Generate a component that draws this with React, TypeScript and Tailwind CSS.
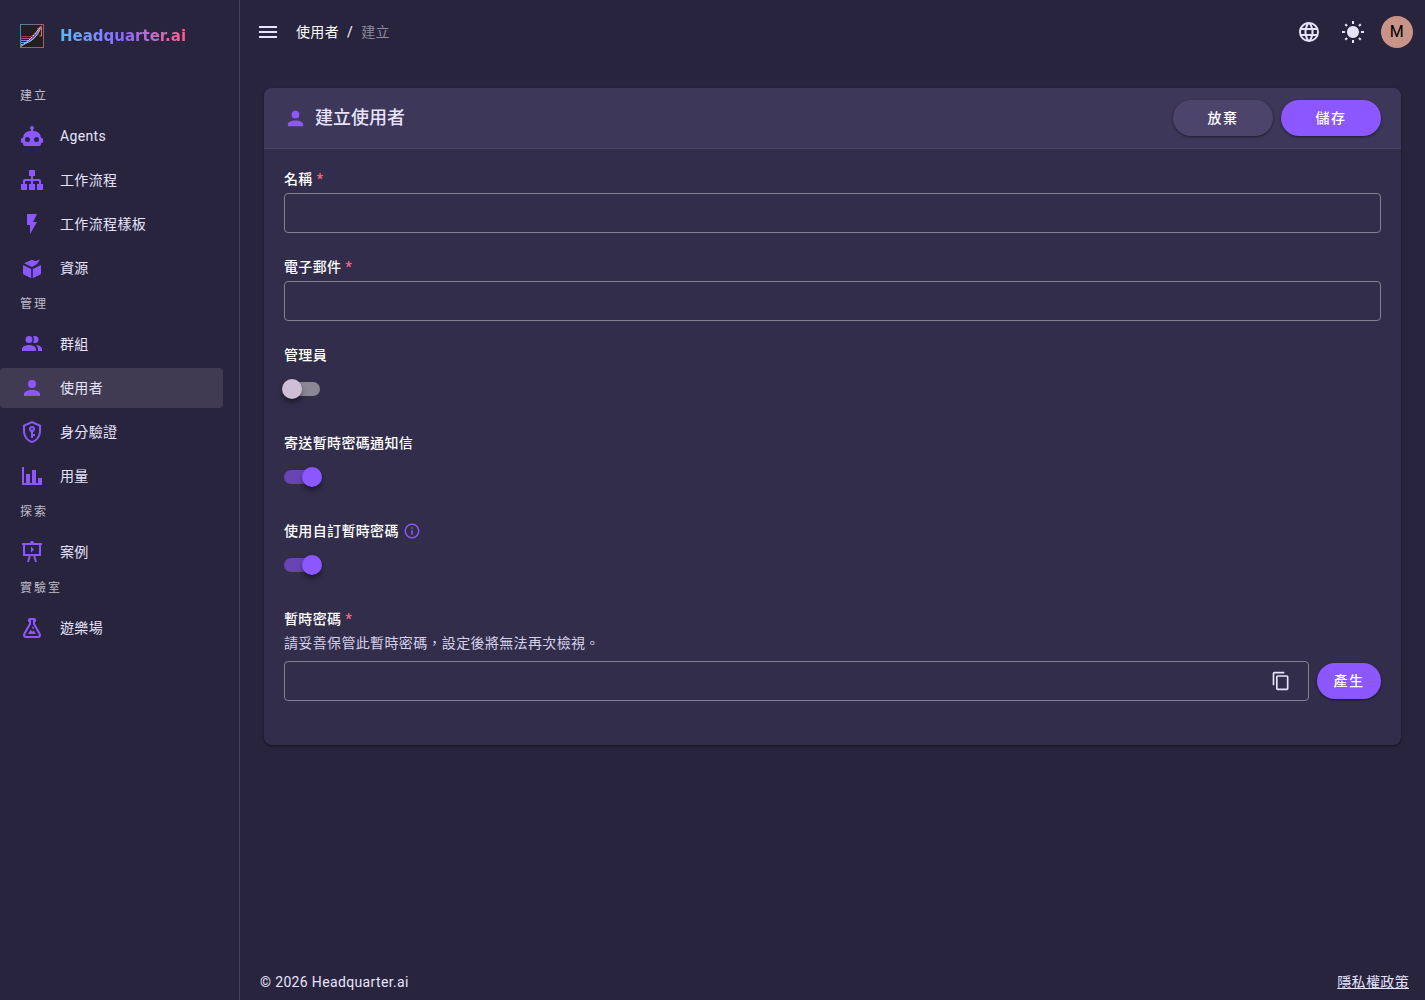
import { useState, type ReactNode } from "react";

const icons = {
  robot:
    "M12,2A2,2 0 0,1 14,4C14,4.74 13.6,5.39 13,5.73V7H14A7,7 0 0,1 21,14H22A1,1 0 0,1 23,15V18A1,1 0 0,1 22,19H21V20A2,2 0 0,1 19,22H5A2,2 0 0,1 3,20V19H2A1,1 0 0,1 1,18V15A1,1 0 0,1 2,14H3A7,7 0 0,1 10,7H11V5.73C10.4,5.39 10,4.74 10,4A2,2 0 0,1 12,2M7.5,13A2.5,2.5 0 0,0 5,15.5A2.5,2.5 0 0,0 7.5,18A2.5,2.5 0 0,0 10,15.5A2.5,2.5 0 0,0 7.5,13M16.5,13A2.5,2.5 0 0,0 14,15.5A2.5,2.5 0 0,0 16.5,18A2.5,2.5 0 0,0 19,15.5A2.5,2.5 0 0,0 16.5,13Z",
  sitemap:
    "M9,2V8H11V11H5C3.89,11 3,11.89 3,13V16H1V22H7V16H5V13H11V16H9V22H15V16H13V13H19V16H17V22H23V16H21V13C21,11.89 20.11,11 19,11H13V8H15V2H9Z",
  flash: "M7,2V13H10V22L17,10H13L17,2H7Z",
  box: "M3,9L11.2,13.1V22.2L3.6,18.4C3.2,18.2 3,17.8 3,17.4V9M21,9V17.4C21,17.8 20.8,18.2 20.4,18.4L12.8,22.2V13.1L21,9M4,7.2L11.2,4.1C11.7,3.9 12.3,3.9 12.8,4.1L14.8,5C16.4,4.9 18.2,4.3 19.8,3.2C19.2,5.4 17.6,7.4 16,8.8L12,10.9L4,7.2Z",
  group:
    "M16 17V19H2V17S2 13 9 13 16 17 16 17M12.5 7.5A3.5 3.5 0 1 0 9 11A3.5 3.5 0 0 0 12.5 7.5M15.94 13A5.32 5.32 0 0 1 18 17V19H22V17S22 13.37 15.94 13M15 4A3.39 3.39 0 0 0 13.07 4.59A5 5 0 0 1 13.07 10.41A3.39 3.39 0 0 0 15 11A3.5 3.5 0 0 0 15 4Z",
  account:
    "M12,4A4,4 0 0,1 16,8A4,4 0 0,1 12,12A4,4 0 0,1 8,8A4,4 0 0,1 12,4M12,14C16.42,14 20,15.79 20,18V20H4V18C4,15.79 7.58,14 12,14Z",
  shieldKey:
    "M21,11C21,16.55 17.16,21.74 12,23C6.84,21.74 3,16.55 3,11V5L12,1L21,5V11M12,21C15.75,20 19,15.54 19,11.22V6.3L12,3.18L5,6.3V11.22C5,15.54 8.25,20 12,21M12,6A3,3 0 0,1 15,9C15,10.31 14.17,11.42 13,11.83V14H15V16H13V18H11V11.83C9.83,11.42 9,10.31 9,9A3,3 0 0,1 12,6M12,8A1,1 0 0,0 11,9A1,1 0 0,0 12,10A1,1 0 0,0 13,9A1,1 0 0,0 12,8Z",
  chart: "M22,21H2V3H4V19H6V10H10V19H12V6H16V19H18V14H22V21Z",
  presentation:
    "M2,3H10A2,2 0 0,1 12,1A2,2 0 0,1 14,3H22V5H21V16H15.25L17,22H15L13.25,16H10.75L9,22H7L8.75,16H3V5H2V3M5,5V14H19V5H5M11,6.5L14,9.5L11,12.5V6.5Z",
  flask:
    "M6,22A3,3 0 0,1 3,19C3,18.4 3.18,17.84 3.5,17.37L9,7.81V6A1,1 0 0,1 8,5V4A2,2 0 0,1 10,2H14A2,2 0 0,1 16,4V5A1,1 0 0,1 15,6V7.81L20.5,17.37C20.82,17.84 21,18.4 21,19A3,3 0 0,1 18,22H6M5,19A1,1 0 0,0 6,20H18A1,1 0 0,0 19,19C19,18.79 18.93,18.59 18.82,18.43L13,8.35V4H11V8.35L5.18,18.43C5.07,18.59 5,18.79 5,19M8,18L10.5,13.7L12.5,15.7L13.8,14.4L16,18H8M13,10.8A0.9,0.9 0 1,1 12.9,10.8Z",
  copy: "M19,21H8V7H19M19,5H8A2,2 0 0,0 6,7V21A2,2 0 0,0 8,23H19A2,2 0 0,0 21,21V7A2,2 0 0,0 19,5M16,1H4A2,2 0 0,0 2,3V17H4V3H16V1Z",
  web: "M16.36,14C16.44,13.34 16.5,12.68 16.5,12C16.5,11.32 16.44,10.66 16.36,10H19.74C19.9,10.64 20,11.31 20,12C20,12.69 19.9,13.36 19.74,14M14.59,19.56C15.19,18.45 15.65,17.25 15.97,16H18.92C17.96,17.65 16.43,18.93 14.59,19.56M14.34,14H9.66C9.56,13.34 9.5,12.68 9.5,12C9.5,11.32 9.56,10.65 9.66,10H14.34C14.43,10.65 14.5,11.32 14.5,12C14.5,12.68 14.43,13.34 14.34,14M12,19.96C11.17,18.76 10.5,17.43 10.09,16H13.91C13.5,17.43 12.83,18.76 12,19.96M8,8H5.08C6.03,6.34 7.57,5.06 9.4,4.44C8.8,5.55 8.35,6.75 8,8M5.08,16H8C8.35,17.25 8.8,18.45 9.4,19.56C7.57,18.93 6.03,17.65 5.08,16M4.26,14C4.1,13.36 4,12.69 4,12C4,11.31 4.1,10.64 4.26,10H7.64C7.56,10.66 7.5,11.32 7.5,12C7.5,12.68 7.56,13.34 7.64,14M12,4.03C12.83,5.23 13.5,6.57 13.91,8H10.09C10.5,6.57 11.17,5.23 12,4.03M18.92,8H15.97C15.65,6.75 15.19,5.55 14.59,4.44C16.43,5.07 17.96,6.34 18.92,8M12,2C6.47,2 2,6.5 2,12A10,10 0 0,0 12,22A10,10 0 0,0 22,12A10,10 0 0,0 12,2Z",
  menu: "M3,6H21V8H3V6M3,11H21V13H3V11M3,16H21V18H3V16Z",
  sun: "M12,6A6,6 0 1,1 11.99,6M11,1H13V4H11V1M11,20H13V23H11V20M1,11H4V13H1V11M20,11H23V13H20V11M3.55,4.96L4.96,3.55L6.76,5.34L5.34,6.76L3.55,4.96M17.24,5.34L19.04,3.55L20.45,4.96L18.66,6.76L17.24,5.34M3.55,19.04L5.34,17.24L6.76,18.66L4.96,20.45L3.55,19.04M17.24,18.66L18.66,17.24L20.45,19.04L19.04,20.45L17.24,18.66Z",
  info: "M11,9H13V7H11M12,20C7.59,20 4,16.41 4,12C4,7.59 7.59,4 12,4C16.41,4 20,7.59 20,12C20,16.41 16.41,20 12,20M12,2A10,10 0 0,0 2,12A10,10 0 0,0 12,22A10,10 0 0,0 22,12A10,10 0 0,0 12,2M11,17H13V11H11V17Z",
};

type IconName = keyof typeof icons;

function Icon({ name, className = "size-6" }: { name: IconName; className?: string }) {
  return (
    <svg viewBox="0 0 24 24" className={`shrink-0 ${className}`} fill="currentColor" aria-hidden="true">
      <path d={icons[name]} />
    </svg>
  );
}

function LogoMark() {
  return (
    <svg viewBox="0 0 24 24" className="size-6 shrink-0" fill="none" aria-hidden="true">
      <defs>
        <linearGradient id="frame" x1="0" y1="0" x2="1" y2="0">
          <stop offset="0" stopColor="#3f8ba3" />
          <stop offset="0.5" stopColor="#6b6ca0" />
          <stop offset="1" stopColor="#b0566a" />
        </linearGradient>
        <linearGradient id="rise" x1="0" y1="24" x2="24" y2="0" gradientUnits="userSpaceOnUse">
          <stop offset="0" stopColor="#6fc3f0" />
          <stop offset="0.5" stopColor="#b9c4f5" />
          <stop offset="1" stopColor="#d9736f" />
        </linearGradient>
      </defs>
      <rect x="0.5" y="0.5" width="23" height="23" fill="#231f20" stroke="url(#frame)" />
      <path d="M1 12.5H11C14 11 17 7 20 3" stroke="#a83440" />
      <path d="M1 14.5H10C14 13 17 8 20.5 3" stroke="#a05a9a" />
      <path d="M1 16.5H9C14 14 17 9 21 3" stroke="#8a7be0" />
      <path d="M1 18.5H7C13 17 17 11 21 4" stroke="#4aa0e0" />
      <path d="M1 22.5C6 18 16 17 20 5" stroke="url(#rise)" />
      <path d="M1 21C7 19 13 13 21 2" stroke="#d8e8f8" strokeDasharray="2 1" />
      <path d="M21.5 3V12H19.5" stroke="#c98a5a" />
      <path d="M17 5L22 1.5" stroke="#c95060" />
    </svg>
  );
}

const sections: { title: string; items: { label: string; icon: IconName; active?: boolean }[] }[] = [
  {
    title: "建立",
    items: [
      { label: "Agents", icon: "robot" },
      { label: "工作流程", icon: "sitemap" },
      { label: "工作流程樣板", icon: "flash" },
      { label: "資源", icon: "box" },
    ],
  },
  {
    title: "管理",
    items: [
      { label: "群組", icon: "group" },
      { label: "使用者", icon: "account", active: true },
      { label: "身分驗證", icon: "shieldKey" },
      { label: "用量", icon: "chart" },
    ],
  },
  { title: "探索", items: [{ label: "案例", icon: "presentation" }] },
  { title: "實驗室", items: [{ label: "遊樂場", icon: "flask" }] },
];

function Sidebar() {
  return (
    <aside className="w-60 shrink-0 border-r border-[#464259]">
      <a href="#" className="flex h-[72px] items-center gap-4 px-5">
        <LogoMark />
        <span className="bg-linear-to-r from-[#56b9fb] via-[#8c66ff] to-[#ff5c86] bg-clip-text font-['DejaVu_Sans'] text-[15px] leading-5 font-bold tracking-normal text-transparent">
          Headquarter.ai
        </span>
      </a>
      <nav className="pt-2 pr-4">
        {sections.map((section) => (
          <section key={section.title}>
            <h2 className="mb-1 px-5 text-xs leading-8 tracking-[2px] text-[#c0bdcb]">{section.title}</h2>
            <ul className="flex flex-col gap-1">
              {section.items.map((item) => (
                <li key={item.label}>
                  <a
                    href="#"
                    aria-current={item.active ? "page" : undefined}
                    className={`flex h-10 items-center gap-4 rounded px-5 ${item.active ? "bg-[#403b53]" : ""}`}
                  >
                    <Icon name={item.icon} className="size-6 text-[#8c57ff]" />
                    {item.label}
                  </a>
                </li>
              ))}
            </ul>
          </section>
        ))}
      </nav>
    </aside>
  );
}

function TopBar() {
  return (
    <header className="flex h-16 items-center pr-3 pl-4">
      <button type="button" aria-label="選單" className="mr-4">
        <Icon name="menu" />
      </button>
      <nav className="flex flex-1 items-center gap-2">
        <a href="#" className="text-white">
          使用者
        </a>
        <span className="text-white">/</span>
        <span className="text-[#8d8a99]">建立</span>
      </nav>
      <div className="flex items-center gap-1">
        <button type="button" aria-label="語言" className="flex size-10 items-center justify-center">
          <Icon name="web" />
        </button>
        <button type="button" aria-label="主題" className="flex size-10 items-center justify-center">
          <Icon name="sun" />
        </button>
        <button
          type="button"
          aria-label="帳號"
          className="ml-1 flex size-8 items-center justify-center rounded-full bg-[#c99487] text-base text-black"
        >
          M
        </button>
      </div>
    </header>
  );
}

function PillButton({ children, className }: { children: ReactNode; className: string }) {
  return (
    <button
      type="button"
      className={`h-9 shrink-0 rounded-full text-center font-medium tracking-widest text-white shadow shadow-black/40 ${className}`}
    >
      {children}
    </button>
  );
}

function Required() {
  return <span className="ml-1 text-[#ff6b85]">*</span>;
}

function TextField({ id, label }: { id: string; label: string }) {
  return (
    <div className="flex flex-col gap-1">
      <label htmlFor={id} className="font-medium text-white">
        {label}
        <Required />
      </label>
      <input
        id={id}
        type="text"
        className="h-10 w-full rounded border border-[#85818f] bg-transparent px-4 outline-none focus:border-[#8c57ff]"
      />
    </div>
  );
}

function SwitchField({ id, label, initial, info }: { id: string; label: string; initial: boolean; info?: boolean }) {
  const [on, setOn] = useState(initial);
  return (
    <div className="flex flex-col gap-1">
      <div className="flex items-center gap-1">
        <label htmlFor={id} className="font-medium text-white">
          {label}
        </label>
        {info && <Icon name="info" className="size-[18px] text-[#8c57ff]" />}
      </div>
      <div className="flex h-10 items-center">
        <input
          id={id}
          type="checkbox"
          role="switch"
          checked={on}
          onChange={() => setOn(!on)}
          className="relative h-3.5 w-9 cursor-pointer appearance-none rounded-full bg-[#8b8795] before:absolute before:-top-[3px] before:-left-0.5 before:size-5 before:rounded-full before:bg-[#cfbfd6] before:shadow-md before:shadow-black/40 checked:bg-[#6746b3] checked:before:left-[18px] checked:before:bg-[#8c57ff]"
        />
      </div>
    </div>
  );
}

export default function App() {
  return (
    <div className="flex min-h-screen bg-[#28243d] font-['Roboto','Noto_Sans_CJK_TC',sans-serif] text-sm leading-5 tracking-wide text-[#e7e3fc]">
      <Sidebar />
      <div className="flex min-w-0 flex-1 flex-col">
        <TopBar />
        <main className="flex-1 p-6">
          <form className="overflow-hidden rounded-lg bg-[#322d4a] shadow shadow-black/40">
            <div className="flex items-center gap-2 border-b border-[#4a4463] bg-[#3d3759] px-5 py-3">
              <Icon name="account" className="size-[23px] text-[#8c57ff]" />
              <h1 className="flex-1 text-lg leading-6 font-medium tracking-normal">建立使用者</h1>
              <PillButton className="w-25 bg-[#4c446b]">放棄</PillButton>
              <PillButton className="w-25 bg-[#8c57ff]">儲存</PillButton>
            </div>
            <div className="flex flex-col gap-6 px-5 pt-5 pb-11">
              <TextField id="name" label="名稱" />
              <TextField id="email" label="電子郵件" />
              <SwitchField id="admin" label="管理員" initial={false} />
              <SwitchField id="notify" label="寄送暫時密碼通知信" initial={true} />
              <SwitchField id="custom" label="使用自訂暫時密碼" initial={true} info />
              <div className="flex flex-col">
                <label htmlFor="password" className="font-medium text-white">
                  暫時密碼
                  <Required />
                </label>
                <p id="password-hint" className="mt-1 mb-2 text-[#d5d1ea]">
                  請妥善保管此暫時密碼，設定後將無法再次檢視。
                </p>
                <div className="flex items-center gap-2">
                  <div className="flex h-10 flex-1 items-center rounded border border-[#85818f] pr-[17px] focus-within:border-[#8c57ff]">
                    <input
                      id="password"
                      type="text"
                      aria-describedby="password-hint"
                      className="h-full min-w-0 flex-1 bg-transparent px-4 outline-none"
                    />
                    <button type="button" aria-label="複製">
                      <Icon name="copy" className="size-5" />
                    </button>
                  </div>
                  <PillButton className="w-16 bg-[#8c57ff]">產生</PillButton>
                </div>
              </div>
            </div>
          </form>
        </main>
        <footer className="flex items-center justify-between py-2 pr-4 pl-5">
          <span>© 2026 Headquarter.ai</span>
          <a href="#" className="underline">
            隱私權政策
          </a>
        </footer>
      </div>
    </div>
  );
}
